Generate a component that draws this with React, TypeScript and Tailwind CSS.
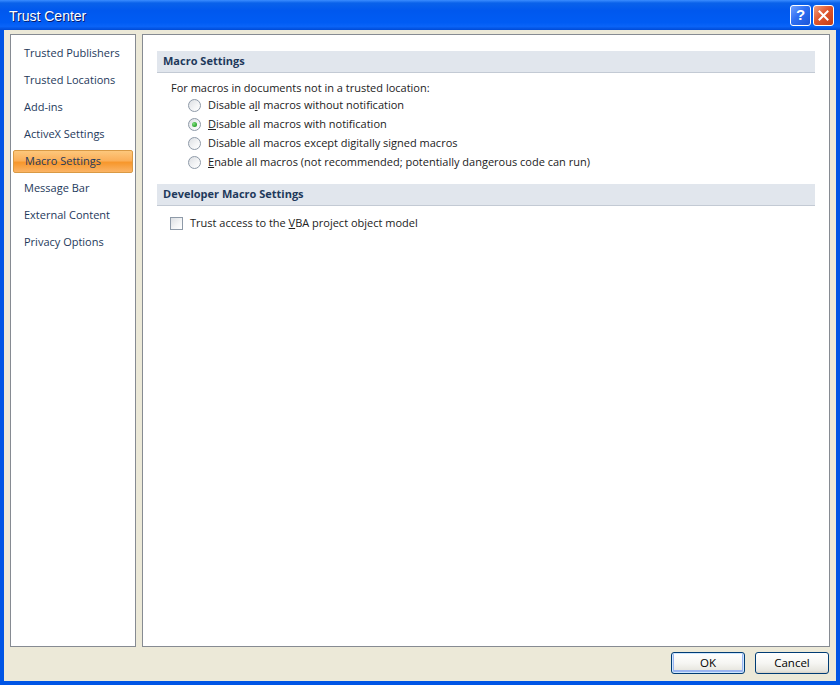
import React from 'react';

const navItems = [
  'Trusted Publishers',
  'Trusted Locations',
  'Add-ins',
  'ActiveX Settings',
  'Macro Settings',
  'Message Bar',
  'External Content',
  'Privacy Options',
];

const Radio = ({ checked }: { checked?: boolean }) => (
  <span className="flex h-[13px] w-[13px] shrink-0 items-center justify-center rounded-full border border-[#8e9aa8] bg-[linear-gradient(135deg,#dcdfe3_0%,#f4f5f6_60%,#ffffff_100%)]">
    {checked && (
      <span className="h-[5px] w-[5px] rounded-full bg-[radial-gradient(circle_at_35%_35%,#7ee07e_0%,#2ea22e_70%,#1f7f1f_100%)]" />
    )}
  </span>
);

const SectionHeader = ({ children }: { children: React.ReactNode }) => (
  <div className="flex h-[22px] items-center border-b border-[#c3cad4] bg-[#e1e6ed] pl-[6px] text-[11px] font-bold text-[#1e395b]">
    {children}
  </div>
);

const XpButton = ({ children, isDefault }: { children: React.ReactNode; isDefault?: boolean }) => (
  <button
    className={
      'flex h-[22px] w-[74px] items-center justify-center rounded-[3px] border border-[#003c74] bg-[linear-gradient(to_bottom,#ffffff_0%,#f6f6f3_50%,#e6e5de_90%,#d6d0c5_100%)] text-[11.5px] text-black ' +
      (isDefault ? 'shadow-[inset_0_0_0_1px_#cee7ff,inset_0_-1px_0_2px_#9ab4f0]' : '')
    }
  >
    {children}
  </button>
);

export default function App() {
  return (
    <div className="flex h-[685px] w-[840px] flex-col overflow-hidden bg-[#0055e5] font-['Open_Sans','Liberation_Sans',sans-serif]">
      {/* Title bar */}
      <div className="flex h-[30px] shrink-0 items-center justify-between bg-[linear-gradient(to_bottom,#3b8dff_0%,#0a62ea_10%,#0058ee_35%,#005cf4_75%,#0a64f8_88%,#004bd6_100%)] pl-[9px] pr-[6px]">
        <span className="pt-[2px] font-['Liberation_Sans',sans-serif] text-[14px] text-white [text-shadow:1px_1px_0_#0a1a6a]">
          Trust Center
        </span>
        <div className="flex gap-[2px]">
          <div className="flex h-[21px] w-[21px] items-center justify-center rounded-[3px] border border-white bg-[linear-gradient(135deg,#6fa0ff_0%,#2e6ff2_45%,#1a55d8_100%)] font-['Liberation_Sans',sans-serif] text-[15px] font-bold text-white">
            ?
          </div>
          <div className="flex h-[21px] w-[21px] items-center justify-center rounded-[3px] border border-white bg-[linear-gradient(135deg,#f0a080_0%,#e0572f_45%,#c53c14_100%)]">
            <svg width="11" height="11" viewBox="0 0 11 11">
              <path d="M1.5 1.5 L9.5 9.5 M9.5 1.5 L1.5 9.5" stroke="white" strokeWidth="2" strokeLinecap="square" />
            </svg>
          </div>
        </div>
      </div>

      {/* Body */}
      <div className="flex flex-1 flex-col border-x-4 border-b-4 border-[#0055e5] bg-[#ece9d8]">
        <div className="flex h-[617px] gap-[6px] px-[6px] pt-[4px]">
          {/* Left nav */}
          <div className="flex w-[126px] flex-col gap-[4px] border border-[#868b92] bg-white px-[2px] pt-[7px]">
            {navItems.map((item) => {
              const active = item === 'Macro Settings';
              return (
                <div
                  key={item}
                  className={
                    'flex h-[23px] items-center pl-[11px] text-[11px] text-[#1e395b] ' +
                    (active
                      ? 'rounded-[2px] border border-[#d99a45] bg-[linear-gradient(to_bottom,#fdc77c_0%,#fbb05a_45%,#f7972c_55%,#fbb466_100%)]'
                      : '')
                  }
                >
                  {item}
                </div>
              );
            })}
          </div>

          {/* Right content */}
          <div className="flex flex-1 flex-col border border-[#868b92] bg-white px-[14px] pt-[16px] text-[11px] text-[#222]">
            <SectionHeader>Macro Settings</SectionHeader>
            <div className="flex flex-col pl-[14px] pt-[8px]">
              <div className="flex h-[15px] items-center">For macros in documents not in a trusted location:</div>
              <div className="flex flex-col pl-[17px]">
                <label className="flex h-[19px] items-center gap-[7px]">
                  <Radio />
                  <span>
                    Disable a<u>l</u>l macros without notification
                  </span>
                </label>
                <label className="flex h-[19px] items-center gap-[7px]">
                  <Radio checked />
                  <span>
                    <u>D</u>isable all macros with notification
                  </span>
                </label>
                <label className="flex h-[19px] items-center gap-[7px]">
                  <Radio />
                  <span>
                    Disable all macros except di<u>g</u>itally signed macros
                  </span>
                </label>
                <label className="flex h-[19px] items-center gap-[7px]">
                  <Radio />
                  <span>
                    <u>E</u>nable all macros (not recommended; potentially dangerous code can run)
                  </span>
                </label>
              </div>
            </div>
            <div className="mt-[12px]">
              <SectionHeader>Developer Macro Settings</SectionHeader>
            </div>
            <label className="mt-[9px] flex h-[16px] items-center gap-[7px] pl-[13px]">
              <span className="h-[13px] w-[13px] shrink-0 border border-[#8e9aa8] bg-[linear-gradient(135deg,#dcdfe3_0%,#f4f5f6_60%,#ffffff_100%)]" />
              <span>
                Trust access to the <u>V</u>BA project object model
              </span>
            </label>
          </div>
        </div>

        {/* Buttons */}
        <div className="flex items-start justify-end gap-[10px] pr-[7px] pt-[5px]">
          <XpButton isDefault>OK</XpButton>
          <XpButton>Cancel</XpButton>
        </div>
      </div>
    </div>
  );
}
